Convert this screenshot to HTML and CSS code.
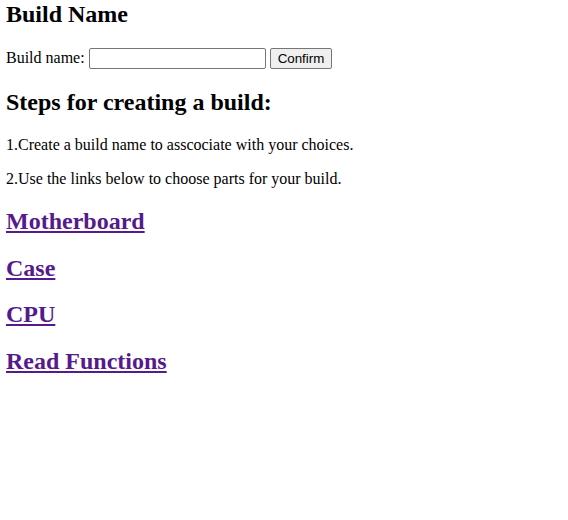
FILE: index.html
```html
<!DOCTYPE html>
<html>
<head>
<meta charset="utf-8">
<title>Build Name</title>
<link rel="stylesheet" href="styles.css">
</head>
<body>
<h2 class="title">Build Name</h2>
<form class="build-form">
<label for="bname">Build name:</label> <input type="text" id="bname" class="name-input"> <button type="button" class="confirm">Confirm</button>
</form>
<h2>Steps for creating a build:</h2>
<p>1.Create a build name to asscociate with your choices.</p>
<p>2.Use the links below to choose parts for your build.</p>
<h2><a href="#" class="part">Motherboard</a></h2>
<h2><a href="#" class="part">Case</a></h2>
<h2><a href="#" class="part">CPU</a></h2>
<h2><a href="#" class="part">Read Functions</a></h2>
</body>
</html>
```
FILE: styles.css
```css
html, body {
  background: #fff;
}
body {
  margin: 0 6px;
  padding-top: 1px;
  font-family: "Liberation Serif", "Times New Roman", serif;
  font-size: 16px;
  color: #000;
}
h2 {
  font-size: 24px;
  font-weight: bold;
  margin: 19.92px 0;
}
h2.title {
  margin-top: 0;
}
p {
  margin: 16px 0;
}
.build-form {
  margin: 0;
}
.name-input {
  font-family: "Liberation Sans", Arial, sans-serif;
  font-size: 13.33px;
  width: 171px;
  height: 17px;
  padding: 1px 2px;
  border: 1px solid #767676;
  border-radius: 2px;
  margin: 0;
  background: #fff;
  box-sizing: content-box;
}
.confirm {
  font-family: "Liberation Sans", Arial, sans-serif;
  font-size: 13.33px;
  color: #000;
  background: #efefef;
  border: 1px solid #767676;
  border-radius: 2px;
  padding: 1px 7px;
  margin: 0;
  height: 21px;
}
a.part {
  color: #551a8b;
  text-decoration: underline;
}
```
